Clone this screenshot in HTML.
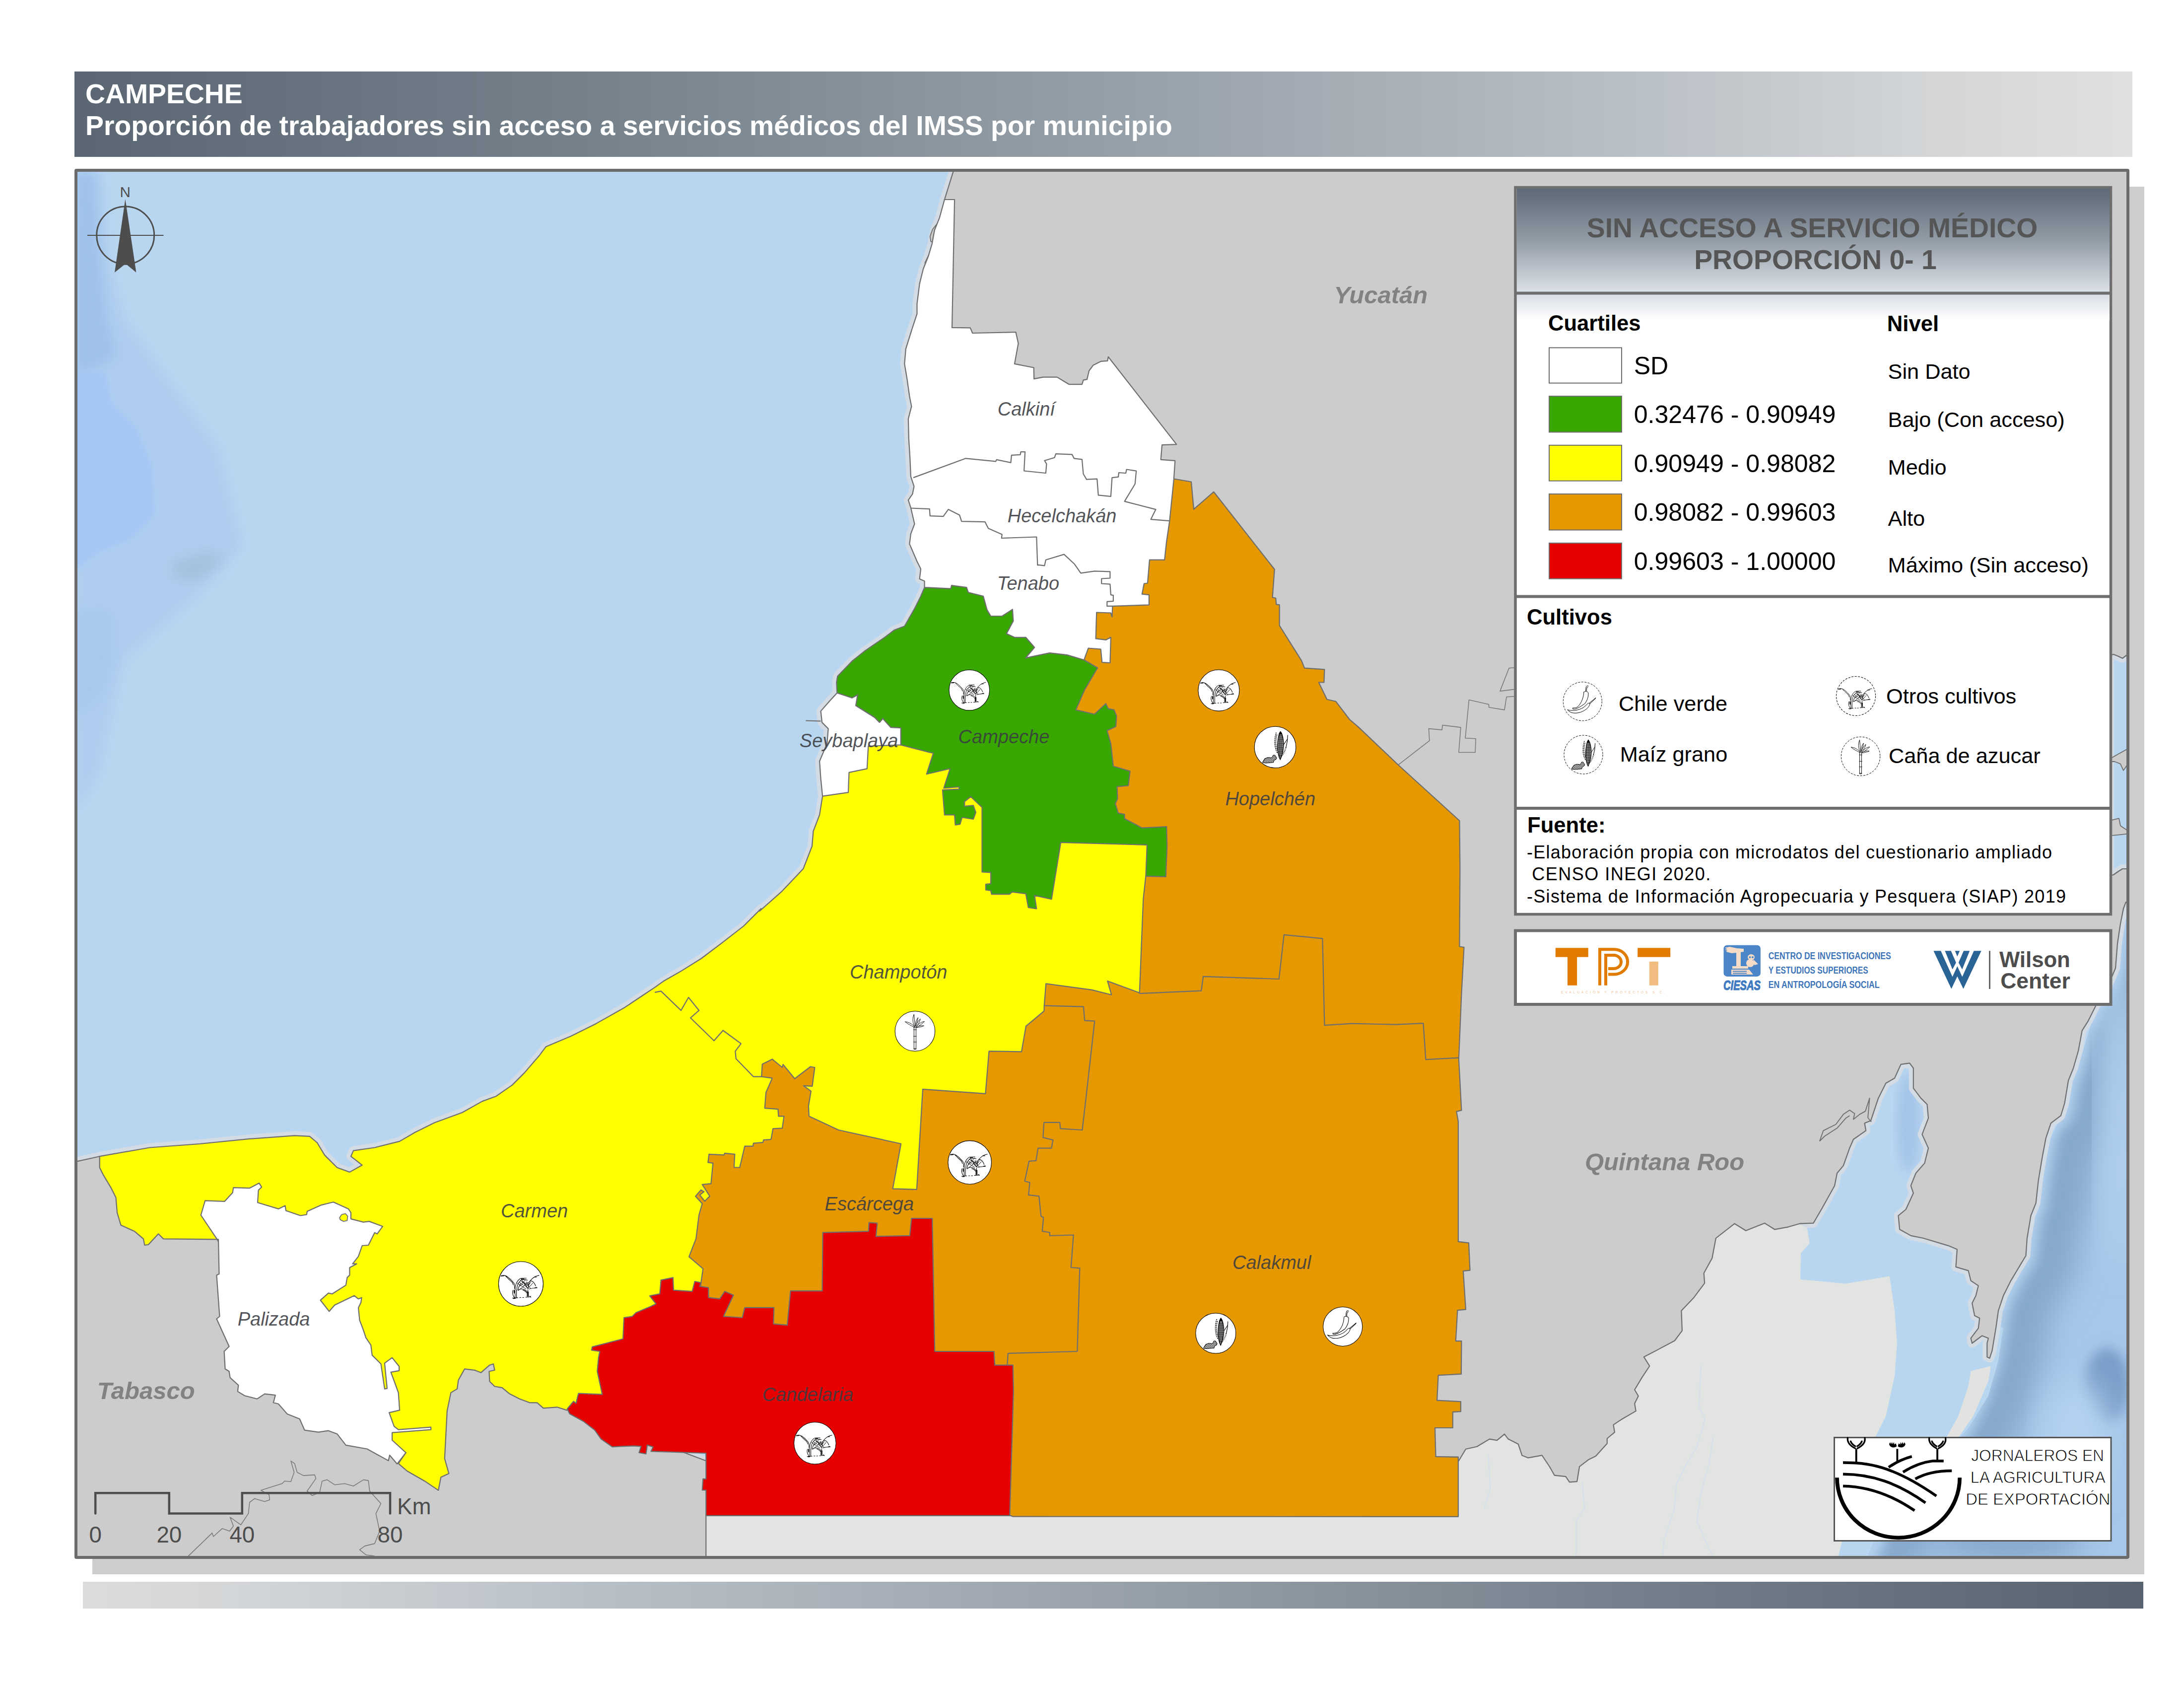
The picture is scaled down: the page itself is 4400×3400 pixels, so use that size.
<!DOCTYPE html>
<html><head><meta charset="utf-8"><title>Campeche</title><style>
html,body{margin:0;padding:0;background:#fff;}
body{width:4400px;height:3400px;position:relative;overflow:hidden;font-family:"Liberation Sans",sans-serif;}
.abs{position:absolute;}
#hdr{left:150px;top:144px;width:4146px;height:172px;background:linear-gradient(90deg,#5a6672 0%,#75828c 25%,#959fa8 50%,#b8bfc5 75%,#d3d5d7 90%,#e0e0e0 100%);}
#hdr div{position:absolute;left:22px;color:#fff;font-weight:bold;font-size:55.35px;white-space:nowrap;line-height:64px;}
#ftr{left:167px;top:3186px;width:4151px;height:54px;background:linear-gradient(90deg,#dcdcdc 0%,#d0d3d6 10%,#b8c0c7 25%,#9aa3ac 49%,#74818c 75%,#57636e 100%);}
#shadow1{left:4290px;top:376px;width:30px;height:2795px;background:#cdcdcd;}
#shadow2{left:186px;top:3140px;width:4134px;height:31px;background:#cdcdcd;}
#frame{left:150px;top:340px;width:4128px;height:2788px;border:6px solid #6b6b6b;border-radius:4px;overflow:hidden;background:#b9d6f0;}
svg text{font-family:"Liberation Sans",sans-serif;}
.lbl{font-style:italic;font-size:38px;fill:#3a3c42;fill-opacity:.88;}
.st{font-style:italic;font-weight:bold;font-size:49px;fill:#828282;}
.lg{font-size:43.3px;fill:#000;}
.lgb{font-size:43.6px;font-weight:bold;fill:#000;}
.rng{font-size:50.1px;fill:#000;}
.src{font-size:36px;fill:#000;}
</style></head><body>
<div id="hdr" class="abs"><div style="top:13px">CAMPECHE</div><div style="top:77px">Proporción de trabajadores sin acceso a servicios médicos del IMSS por municipio</div></div>
<div id="shadow1" class="abs"></div><div id="shadow2" class="abs"></div>
<div id="frame" class="abs">
<svg width="4128" height="2788" viewBox="156 346 4128 2788" style="position:absolute;left:0;top:0">
<defs>
<linearGradient id="gcar" x1="0" x2="1" y1="0" y2="0"><stop offset="0" stop-color="#b4d2ee"/><stop offset="0.12" stop-color="#9bbbdc"/><stop offset="0.3" stop-color="#88aacf"/><stop offset="0.6" stop-color="#93b5da"/><stop offset="1" stop-color="#a4c4e8"/></linearGradient>
<linearGradient id="glh" x1="0" x2="0" y1="0" y2="1"><stop offset="0" stop-color="#5d6976"/><stop offset="0.5" stop-color="#929ca7"/><stop offset="1" stop-color="#dde2e8"/></linearGradient>
<linearGradient id="glh2" x1="0" x2="0" y1="0" y2="1"><stop offset="0" stop-color="#d9dee5"/><stop offset="1" stop-color="#ffffff"/></linearGradient>
<filter id="b30" x="-20%" y="-20%" width="140%" height="140%"><feGaussianBlur stdDeviation="30"/></filter>
<filter id="b5" x="-20%" y="-20%" width="140%" height="140%"><feGaussianBlur stdDeviation="5"/></filter>
<filter id="b12" x="-20%" y="-20%" width="140%" height="140%"><feGaussianBlur stdDeviation="12"/></filter>
<pattern id="grid" width="2.5" height="2.5" patternUnits="userSpaceOnUse"><rect width="2.5" height="2.5" fill="#fff"/><path d="M0,0.5H2.5M0.5,0V2.5" stroke="#000" stroke-width="0.9" fill="none"/></pattern>
<pattern id="hatch" width="2.4" height="2.4" patternUnits="userSpaceOnUse" patternTransform="rotate(40)"><rect width="2.4" height="2.4" fill="#fff"/><path d="M0,0.5H2.4M0.5,0V2.4" stroke="#000" stroke-width="0.6" fill="none"/></pattern>

<g id="ic-chile" fill="none" stroke="#000" stroke-width="1" stroke-linecap="round" stroke-linejoin="round">
<path d="M2.6,-18.8 C2.1,-8.8 -1.4,2.6 -10,11.1 C-13,13 -17,13.5 -19.9,13.2 L-19.6,15.4 C-15,16.5 -8.5,13.9 4.3,4.7 C10,-2 12,-10 11.7,-17.3 C10,-21 4,-21.5 2.6,-18.8 Z" fill="#fff"/>
<path d="M6.4,-21 C6.2,-27 7,-33 11.4,-31.6 M8,-21 C8,-26 9,-30 11.4,-29.5"/>
<path d="M14.9,4.7 C14,11 8,16 1.4,19.6 C-5,23 -15,25 -22.7,22.5 C-26,21 -29,19 -30.6,16.8 C-27,18 -24,18.5 -22.7,18.2 C-18,19 -8,18 1.4,12.5 C5,10 8,7 10,4.7 C11,3 14,3 14.9,4.7 Z" fill="#fff"/>
<path d="M13.5,3.5 L26.7,-7.4 M15,4.5 L26.7,-6.2"/>
</g>

<g id="ic-maiz" fill="none" stroke="#000" stroke-width="0.9" stroke-linecap="round">
<path d="M10,-29.4 C6.5,-25 4.3,-12 4.6,0 C5,10 7,19 9.6,23.3 C12.5,17 15,8 15.8,-2 C16.3,-14 13.5,-26 10,-29.4Z" fill="url(#grid)" stroke-width="1.3"/>
<path d="M10,-29.4 C8.6,-27.8 7.8,-26.2 7.3,-24.5 L12.8,-24.5 C12.3,-26.2 11.5,-27.8 10,-29.4Z" fill="#000"/>
<path d="M2.1,-27.7 C-1.2,-19 -1.6,-6 0.4,1 C1.5,6 3,9 4.9,11.6 M3.4,-24 C1,-16 0.8,-6 2.4,0 C3,3 3.8,5 4.6,6.5" stroke-dasharray="2.4 1.3" stroke-width="1.3" stroke-linecap="butt"/>
<path d="M23.7,-22.7 C23.7,-15 22,-5 20.4,0.6" stroke-width="1.1"/>
<path d="M20.4,0.6 C19,5 17,10 14.5,13.5 C13.5,15.2 12.5,16.5 11.5,17.2" stroke-dasharray="0.9 1.7" stroke-width="2.6" stroke-linecap="butt"/>
<path d="M23.2,-15.5 L16.5,-5.5" stroke-width="1"/>
<path d="M-23.4,27.7 L-19.5,21.6 L-14,19.4 L-6.2,20 L-3.4,15 L-0.7,15 L2.7,20 L1.6,22.7 L-2.3,25 L-3.4,28.8 L-17.3,30 L-23.4,29.4Z" fill="url(#hatch)" stroke-width="1" stroke-linejoin="round"/>
</g>

<g id="ic-otros" fill="none" stroke="#000" stroke-width="0.95" stroke-linecap="round" stroke-linejoin="round">
<path d="M-34.6,-14 C-32,-15 -30,-15 -28.3,-14.7 C-26,-14 -24,-13 -22.6,-11.7 C-20,-9.5 -18,-8 -16.9,-6.6 C-15,-4.5 -13.5,-3 -12.3,-1.4 C-11.5,0 -11.2,1.5 -11.2,2.6 L-11.2,8.3 M-26.6,-13.4 C-24.5,-11.5 -23,-10 -21.5,-8.3 C-19.5,-6.5 -17.5,-4.8 -15.7,-3.1 C-14.5,-1.5 -13.6,0.5 -13.2,2"/>
<path d="M-34.6,-14 L-30,-14.2" stroke-width="1.6"/>
<path d="M-14,11.2 C-14.6,13 -14.8,15 -14.6,16.9 C-14,20 -12.5,22.5 -11.2,24.3 M-7.7,11.2 L-7.7,24.3 M-10.2,12 L-10,24"/>
<ellipse cx="-11.8" cy="13.8" rx="0.9" ry="3.6" fill="#000" stroke="none"/>
<path d="M-10,11.2 C-10,7 -9.8,4 -8.9,1.4 C-8,-1.5 -7,-3.5 -5.4,-5.4 C-4,-7 -2.5,-8.5 -0.9,-9.4 M-7.2,11.2 C-7.2,8 -6.8,5 -6,2.6 C-5,-0.5 -3.6,-2.6 -2,-4.3 C-0.3,-6.2 1.6,-7.8 3.7,-8.9 M-5,11 C-4.6,7 -3,3 0,-0.5"/>
<path d="M0.3,-9.7 L9.4,-10 M0.3,-9.7 L2.6,-7.7 L11.7,-6.6 M3.5,-9.7 L6.5,-7.2"/>
<path d="M11.2,14 L10.9,22 M13.4,14 L13.2,22 M12.3,10 L12.2,22"/>
<path d="M11.2,14 C9.5,12 8,10.8 6,10 C4,9.2 2,8.8 0.3,8.9 C-1.5,9.2 -3,10 -4.3,11.2 M10.5,16 C8.5,13 6,11.6 3.5,11"/>
<path d="M12.9,8.3 C10.5,5 8.5,2.5 6,-0.3 C4.8,-1.6 3.4,-2.8 2,-3.7 M13.2,7.5 C13.3,3 13.8,-0.5 14.6,-3.1 C15.2,-4.2 16.2,-5 17.4,-5.4 M16.3,-5.4 C18.5,-8 20.8,-10 23.2,-11.7 C26,-13.3 29,-14.4 31.8,-14.9 M23.2,-11.7 L27.5,-12 M17.4,-5.4 C19,-5 20.6,-4.2 22,-3.1 C23.6,-1.2 25,1.2 26,3.7 M14.6,8.9 C17.5,8 20.4,7.6 23.2,7.4 C25,7.2 27,7 28.6,6.9 M23.2,7.4 L27.8,5.9"/>
<path d="M-6.6,-1.4 L8.9,8.9 M-4.3,11.2 L16.3,-4.3 M0.3,-9.4 L11.7,8.3 M6,-3.1 L17.4,8.3 M9.4,-3.7 L14.6,5.4 M17.4,-3.1 L13.4,2.6 M20.9,-1.4 L15.2,4.9 M-3,-3 L4,2 M-1,-6 L8,0 M2,-1 L9,-8 M5,3 L12,-3 M8,5 L15,-1 M-2,4 L3,0" stroke-width="0.85"/>
<path d="M-14.6,24.9 L-5.4,24.3 M-2,24.1 L0,24 M3,24 L5,23.9 M8.3,23.5 L17.4,22.6 M15.5,21.5 L17.5,23.5 M-13,25.8 L-9.5,25.5"/>
</g>

<g id="ic-cana" fill="#fff" stroke="#000" stroke-width="0.9" stroke-linecap="round" stroke-linejoin="round">
<path d="M-2,-7 L-2,35.5 L2,35.5 L2,-7 Z M-2.8,-2.8 H2.8 M-2.8,10 H2.8 M-2.8,21.3 H2.8 M-2.5,34 H2.5"/>
<path d="M-1,-9 C-6,-14 -12,-18 -19.5,-18.5 C-14,-14 -8,-11 -2,-8Z"/>
<path d="M-1.5,-10 C-5,-18 -5,-26 -2,-33 C-1,-26 -1,-18 0,-11Z"/>
<path d="M0.5,-11 C1,-18 3,-23 6,-26.5 C5,-21 3.5,-16 2,-11Z"/>
<path d="M2,-11 C4,-17 7,-21 10.5,-24 C9.5,-19 6.5,-14 3.5,-10Z"/>
<path d="M3,-9.5 C8,-15 13,-18.5 18.5,-19 C14.5,-15 9,-11 4,-8Z"/>
<path d="M3,-8 C8,-10.5 13,-11.5 17.5,-10.5 C13,-8.5 8,-7.5 3.5,-7Z"/>
<path d="M-2.5,-7 C-3,-10 3,-11 3,-7" fill="none"/>
</g>
</defs>
<rect x="150" y="340" width="4140" height="2800" fill="#b9d6f0"/>
<path d="M150,346 L205,346 L218,520 L252,640 L330,750 L440,900 L490,1100 L400,1200 L250,1330 L200,1560 L150,1640Z" fill="#afcdf0" filter="url(#b12)"/>
<path d="M150,346 L190,346 L200,500 L215,640 L235,720 L150,760Z" fill="#9fc1ea" filter="url(#b12)"/>
<path d="M150,750.6 L212,750.6 L224.6,812.8 L274.4,862.5 L305.5,937.2 L311.7,1036.7 L262,1086.5 L199.8,1111.4 L150,1148.7Z" fill="#a5c7f4" filter="url(#b5)"/>
<path d="M150,1230 L225,1230 L230,1330 L205,1400 L160,1440 L150,1440Z" fill="#a8c8ee" filter="url(#b12)"/>
<path d="M345,1135 L415,1110 L455,1125 L400,1170 L350,1165Z" fill="#a6c1de" filter="url(#b12)"/>
<ellipse cx="3845" cy="2262" rx="22" ry="100" fill="#a3c3e8" filter="url(#b12)"/>
<clipPath id="carclip"><path d="M4300.0,1320.0 L4300.0,3145.0 L3760.0,3145.0 L3764.1,3134.2 L3794.3,3053.7 L3854.8,3003.3 L3915.2,2932.8 L3965.6,2877.4 L4005.9,2811.9 L4026.0,2741.4 L4036.1,2675.9 L4026.0,2665.2 L4041.1,2619.9 L4056.2,2589.7 L4086.4,2539.3 L4094.0,2478.8 L4106.6,2423.4 L4119.2,2352.9 L4131.8,2292.5 L4146.9,2262.3 L4162.0,2247.2 L4172.1,2191.8 L4197.3,2116.2 L4212.4,2065.8 L4232.5,2025.5 L4262.0,1950.0 L4283.0,1817.0 L4300.0,1750.0Z"/></clipPath>
<g clip-path="url(#carclip)">
<rect x="3700" y="1300" width="600" height="1900" fill="#a7c7ea"/>
<path d="M4290.0,1750.0 L4283.0,1817.0 L4272.0,1860.0 L4262.0,1950.0 L4245.0,1990.0 L4222.4,2025.5 L4207.3,2055.8 L4194.7,2075.9 L4187.2,2116.2 L4177.1,2151.5 L4167.0,2176.6 L4159.5,2222.0 L4151.9,2247.2 L4131.8,2262.3 L4121.7,2292.5 L4114.1,2332.8 L4106.6,2378.1 L4101.6,2423.4 L4091.5,2448.6 L4083.9,2494.0 L4081.4,2529.2 L4066.3,2554.4 L4051.2,2579.6 L4036.1,2609.8 L4026.0,2640.0 L4021.0,2675.3 L4013.4,2720.6 L4008.4,2735.7 L4005.9,2751.5 L3985.7,2811.9 L3955.5,2872.3 L3915.2,2932.8 L3854.8,3003.3 L3794.3,3053.7 L3754.0,3154.4" fill="none" stroke="#86a8cd" stroke-width="210" stroke-linejoin="round" filter="url(#b30)"/>
<path d="M4290.0,1750.0 L4283.0,1817.0 L4272.0,1860.0 L4262.0,1950.0 L4245.0,1990.0 L4222.4,2025.5 L4207.3,2055.8 L4194.7,2075.9 L4187.2,2116.2 L4177.1,2151.5 L4167.0,2176.6 L4159.5,2222.0 L4151.9,2247.2 L4131.8,2262.3 L4121.7,2292.5 L4114.1,2332.8 L4106.6,2378.1 L4101.6,2423.4 L4091.5,2448.6 L4083.9,2494.0 L4081.4,2529.2 L4066.3,2554.4 L4051.2,2579.6 L4036.1,2609.8 L4026.0,2640.0 L4021.0,2675.3 L4013.4,2720.6 L4008.4,2735.7 L4005.9,2751.5 L3985.7,2811.9 L3955.5,2872.3 L3915.2,2932.8 L3854.8,3003.3 L3794.3,3053.7 L3754.0,3154.4" fill="none" stroke="#b3d1ee" stroke-width="44" stroke-linejoin="round" filter="url(#b12)"/>
<ellipse cx="4245" cy="2790" rx="45" ry="75" fill="#7a9ec8" filter="url(#b12)"/>
<ellipse cx="4180" cy="2900" rx="70" ry="120" fill="#b3d2f0" filter="url(#b30)"/>
<ellipse cx="4050" cy="3100" rx="150" ry="50" fill="#86a8cd" filter="url(#b30)"/>
<ellipse cx="4270" cy="2250" rx="40" ry="300" fill="#b0cfee" filter="url(#b30)"/>
</g>
<path d="M1657.1,1603.7 L1651.1,1641.4 L1638.5,1674.2 L1636.0,1704.4 L1618.4,1749.7 L1575.5,1795.1 L1530.2,1835.3 L1533.2,1830.2 L1497.9,1865.5 L1452.6,1900.7 L1412.3,1931.0 L1372.0,1956.1 L1336.7,1976.3 L1319.1,1988.9 L1296.4,2004.0 L1258.7,2029.2 L1200.7,2061.9 L1150.4,2087.1 L1100.0,2108.2 L1087.2,2125.2 L1057.0,2160.4 L1031.8,2185.6 L999.0,2208.3 L971.3,2218.4 L931.0,2241.0 L875.6,2261.2 L835.3,2281.3 L805.1,2298.9 L754.8,2311.5 L712.0,2317.6 L706.9,2329.2 L729.6,2346.8 L704.4,2360.9 L679.2,2351.8 L654.0,2326.6 L638.9,2301.5 L623.8,2288.9 L593.6,2287.4 L502.9,2293.9 L402.2,2304.0 L301.5,2311.5 L200.7,2329.2 L200.7,2351.8 L208.3,2366.9 L223.4,2392.1 L233.5,2412.3 L236.0,2442.5 L243.5,2467.7 L271.2,2480.3 L288.9,2495.4 L291.4,2508.0 L298.9,2507.0 L319.1,2485.3 L329.2,2495.4 L437.5,2496.4 L553.3,2704.4 L754.8,2905.9 L817.7,2926.0 L802.6,2947.9 L820.2,2963.0 L855.5,2983.2 L883.2,3001.8 L888.2,2975.6 L904.3,2968.0 L895.8,2937.8 L900.8,2842.1 L908.4,2805.1 L921.0,2797.6 L923.5,2779.9 L936.1,2757.3 L956.2,2759.8 L968.8,2764.8 L986.4,2749.7 L994.0,2747.2 L996.5,2759.8 L985.4,2762.3 L986.4,2782.5 L996.5,2792.5 L1011.6,2795.1 L1026.7,2807.6 L1046.9,2817.7 L1067.0,2825.3 L1082.1,2825.3 L1094.7,2836.4 L1122.4,2834.3 L1141.6,2840.4 L1301.5,2802.6 L1402.2,2651.5 L1412.3,2583.5 L1416.3,2555.5 L1388.1,2531.3 L1402.2,2495.1 L1408.2,2447.2 L1414.8,2424.5 L1401.2,2409.4 L1412.3,2396.8 L1418.3,2400.4 L1409.8,2406.9 L1419.8,2419.5 L1429.9,2409.4 L1414.8,2385.8 L1432.4,2384.2 L1436.4,2342.9 L1426.4,2341.4 L1428.4,2324.8 L1458.6,2326.3 L1460.1,2322.8 L1480.3,2324.8 L1478.8,2351.5 L1490.3,2351.5 L1500.4,2308.7 L1517.0,2308.7 L1518.0,2302.7 L1537.2,2301.1 L1538.2,2296.1 L1553.3,2295.1 L1557.3,2273.4 L1576.0,2272.4 L1579.5,2248.3 L1568.4,2248.3 L1567.4,2234.2 L1540.7,2232.1 L1543.2,2200.4 L1555.8,2171.7 L1534.2,2168.7 L1535.7,2143.5 L1555.8,2133.4 L1576.0,2150.0 L1577.5,2144.0 L1601.1,2172.7 L1632.9,2148.5 L1641.4,2150.0 L1636.4,2187.8 L1618.8,2186.8 L1633.9,2197.9 L1628.8,2228.1 L1629.9,2248.3 L1689.3,2276.0 L1815.2,2303.7 L1798.6,2394.3 L1846.9,2395.8 L1859.0,2193.9 L1985.4,2202.9 L1992.5,2117.3 L2058.0,2118.3 L2067.0,2066.9 L2103.3,2036.7 L2103.8,2024.1 L2107.3,1981.3 L2200.0,1993.9 L2239.3,2003.7 L2231.2,1976.0 L2295.7,1999.7 L2303.3,1810.8 L2308.3,1765.5 L2331.0,1754.8 L2331.0,1684.2 L2205.1,1654.0 L2003.7,1502.9 L1852.6,1492.9 L1741.8,1462.6 L1676.3,1528.1Z" fill="none" stroke="#d3dbe4" stroke-width="18" stroke-linejoin="round"/>
<path d="M1862.6,1183.1 L1915.5,1185.6 L1917.0,1179.1 L1947.3,1183.1 L1950.8,1193.2 L1981.0,1200.7 L1988.6,1228.4 L1996.1,1241.0 L2018.8,1241.0 L2039.9,1227.4 L2041.4,1251.1 L2027.8,1276.3 L2044.0,1283.8 L2066.6,1283.8 L2084.2,1304.0 L2066.6,1325.1 L2114.5,1315.1 L2149.7,1319.1 L2184.0,1329.2 L2211.2,1345.3 L2185.0,1389.6 L2167.4,1429.9 L2205.1,1438.5 L2227.8,1417.3 L2232.8,1427.4 L2244.4,1429.9 L2249.5,1442.5 L2247.9,1463.6 L2230.3,1471.7 L2237.9,1497.9 L2242.9,1543.2 L2276.6,1553.3 L2273.1,1582.5 L2250.5,1584.5 L2251.5,1608.7 L2246.9,1618.8 L2253.0,1637.9 L2265.6,1640.4 L2265.6,1649.0 L2300.8,1667.6 L2350.2,1665.1 L2351.2,1704.4 L2348.7,1765.8 L2308.4,1764.8 L2310.9,1701.9 L2137.1,1696.8 L2118.5,1811.2 L2084.2,1803.6 L2088.3,1830.3 L2071.7,1827.8 L2066.6,1800.1 L2038.9,1796.6 L2033.9,1801.1 L1997.6,1801.1 L1996.1,1794.0 L1986.0,1792.5 L1986.0,1781.0 L1996.1,1779.9 L1996.1,1757.3 L1978.5,1756.3 L1978.5,1626.3 L1955.8,1604.7 L1943.2,1614.7 L1943.2,1623.8 L1960.9,1622.3 L1965.9,1636.4 L1960.9,1650.0 L1938.2,1646.5 L1934.2,1660.1 L1924.6,1661.6 L1923.1,1641.4 L1902.9,1641.4 L1898.9,1591.1 L1932.1,1589.6 L1932.1,1585.0 L1901.4,1587.5 L1914.0,1548.3 L1866.7,1559.3 L1880.3,1517.0 L1872.7,1515.5 L1814.8,1500.4 L1814.8,1466.2 L1794.6,1465.2 L1778.5,1447.5 L1772.0,1455.1 L1761.9,1445.0 L1724.1,1421.3 L1727.7,1399.7 L1716.6,1405.7 L1686.4,1395.7 L1685.3,1374.5 L1687.4,1361.9 L1716.6,1331.7 L1741.8,1311.5 L1782.1,1283.8 L1802.2,1268.7 L1822.3,1261.2 L1842.5,1225.9 L1855.1,1200.7Z" fill="none" stroke="#d3dbe4" stroke-width="18" stroke-linejoin="round"/>
<path d="M1902.9,402.0 L1892.9,438.3 L1882.8,463.5 L1877.7,491.2 L1870.2,516.4 L1860.1,541.5 L1852.6,571.8 L1847.5,612.1 L1847.5,632.2 L1837.5,662.4 L1824.9,702.7 L1822.3,732.9 L1827.4,763.2 L1832.4,798.4 L1836.4,818.6 L1829.9,843.7 L1830.9,884.0 L1833.4,924.3 L1834.9,959.6 L1841.5,979.7 L1838.5,994.8 L1829.9,1007.4 L1834.9,1022.5 L1842.5,1055.3 L1834.9,1075.4 L1832.4,1095.6 L1847.5,1130.8 L1855.1,1145.9 L1852.6,1166.1 L1862.6,1170.5 L1862.6,1183.1 L1915.5,1185.6 L1917.0,1179.1 L1947.3,1183.1 L1950.8,1193.2 L1981.0,1200.7 L1988.6,1228.4 L1996.1,1241.0 L2018.8,1241.0 L2039.9,1227.4 L2041.4,1251.1 L2027.8,1276.3 L2044.0,1283.8 L2066.6,1283.8 L2084.2,1304.0 L2066.6,1325.1 L2114.5,1315.1 L2149.7,1319.1 L2184.0,1329.2 L2192.5,1305.5 L2217.7,1307.5 L2220.2,1334.2 L2236.4,1335.2 L2237.9,1283.8 L2227.8,1288.9 L2207.6,1286.4 L2209.2,1233.5 L2237.9,1234.5 L2240.4,1242.5 L2241.4,1220.9 L2314.9,1218.4 L2314.9,1198.2 L2300.8,1196.7 L2304.9,1175.5 L2311.9,1174.5 L2315.9,1127.7 L2346.2,1127.7 L2350.2,1090.5 L2356.2,1050.2 L2364.8,965.6 L2367.3,927.8 L2338.6,925.8 L2341.1,896.1 L2370.3,895.1 L2232.8,718.8 L2231.3,726.9 L2217.7,727.9 L2202.6,735.4 L2194.0,747.0 L2190.0,764.2 L2182.5,765.7 L2179.9,774.2 L2153.8,774.2 L2129.6,759.6 L2101.9,759.6 L2083.2,763.2 L2082.7,740.5 L2044.0,732.9 L2051.5,691.6 L2046.5,669.0 L1959.3,671.0 L1954.8,660.4 L1918.0,659.9 L1923.1,402.0Z" fill="none" stroke="#d3dbe4" stroke-width="18" stroke-linejoin="round"/>
<path d="M1686.4,1395.7 L1671.2,1412.3 L1653.6,1432.4 L1656.1,1455.1 L1668.7,1467.7 L1666.2,1497.9 L1651.1,1533.2 L1653.6,1568.4 L1657.1,1603.7 L1709.0,1596.1 L1710.5,1555.8 L1746.8,1548.3 L1749.3,1502.9 L1814.8,1500.4 L1814.8,1466.2 L1794.6,1465.2 L1778.5,1447.5 L1772.0,1455.1 L1761.9,1445.0 L1724.1,1421.3 L1727.7,1399.7 L1716.6,1405.7Z" fill="none" stroke="#d3dbe4" stroke-width="18" stroke-linejoin="round"/>
<path d="M1920.5,345.0 L4290.0,345.0 L4290.0,1322.0 L4284.0,1320.0 L4276.0,1326.0 L4268.0,1322.0 L4258.0,1318.0 L4250.0,1320.0 L4250.0,1764.0 L4258.0,1762.0 L4268.0,1755.0 L4276.0,1750.0 L4284.0,1750.0 L4290.0,1750.0 L4290.0,1817.0 L4283.0,1817.0 L4278.0,1830.0 L4272.0,1860.0 L4266.0,1900.0 L4262.0,1950.0 L4245.0,1990.0 L4222.4,2025.5 L4207.3,2055.8 L4194.7,2075.9 L4187.2,2116.2 L4177.1,2151.5 L4167.0,2176.6 L4159.5,2222.0 L4151.9,2247.2 L4131.8,2262.3 L4121.7,2292.5 L4114.1,2332.8 L4106.6,2378.1 L4101.6,2423.4 L4091.5,2448.6 L4083.9,2494.0 L4081.4,2529.2 L4066.3,2554.4 L4051.2,2579.6 L4036.1,2609.8 L4026.0,2640.0 L4021.0,2675.3 L4013.4,2720.6 L4008.4,2735.7 L4003.3,2733.2 L4003.3,2705.5 L4005.9,2695.4 L3993.3,2690.4 L3973.1,2705.5 L3970.6,2695.4 L3985.7,2675.3 L3988.2,2655.1 L3978.2,2650.1 L3973.1,2624.9 L3980.7,2609.8 L3985.7,2589.7 L3970.6,2579.6 L3965.6,2559.4 L3940.4,2551.9 L3942.9,2516.6 L3925.3,2509.1 L3874.9,2494.0 L3849.7,2488.9 L3827.1,2476.3 L3824.5,2448.6 L3839.7,2436.0 L3854.8,2403.3 L3849.7,2388.2 L3859.8,2363.0 L3877.4,2342.9 L3885.0,2312.6 L3872.4,2284.9 L3885.0,2252.2 L3882.5,2224.5 L3869.9,2211.9 L3854.8,2191.8 L3854.8,2151.5 L3847.2,2141.4 L3829.6,2143.9 L3817.0,2171.6 L3799.4,2181.7 L3784.2,2211.9 L3769.1,2257.2 L3756.5,2262.3 L3759.1,2277.4 L3733.9,2295.0 L3726.3,2312.6 L3713.7,2347.9 L3701.1,2363.0 L3696.1,2388.2 L3670.9,2433.5 L3653.3,2463.7 L3625.6,2464.7 L3602.9,2471.3 L3575.2,2476.3 L3555.1,2463.7 L3517.3,2478.8 L3494.6,2464.7 L3456.9,2494.0 L3449.3,2534.2 L3432.7,2564.5 L3434.2,2584.6 L3411.5,2614.8 L3387.4,2640.0 L3388.9,2680.3 L3373.8,2700.5 L3336.0,2720.6 L3311.8,2733.2 L3323.4,2751.5 L3308.3,2774.1 L3293.2,2799.3 L3300.7,2811.9 L3293.2,2827.0 L3295.7,2842.1 L3265.5,2859.8 L3250.4,2869.8 L3252.9,2884.9 L3237.8,2897.5 L3237.8,2907.6 L3215.1,2932.8 L3200.0,2940.3 L3182.1,2954.0 L3177.1,2984.2 L3162.0,2985.3 L3154.4,2974.2 L3131.8,2971.7 L3121.7,2954.0 L3106.6,2931.4 L3078.9,2936.4 L3066.3,2931.4 L3058.7,2908.7 L3038.6,2898.6 L3031.0,2888.6 L3015.9,2901.1 L3000.8,2898.6 L2975.6,2913.7 L2953.0,2918.8 L2937.9,2944.0 L2937.9,2934.9 L2854.8,2934.9 L2800.0,2800.0 L2800.0,1800.0 L2400.0,1200.0 L2250.0,900.0 L2000.0,700.0 L1902.9,700.2 L1902.9,531.5 L1913.0,410.6 L1902.9,402.0 L1920.6,345.1Z" fill="none" stroke="#d3dbe4" stroke-width="18" stroke-linejoin="round"/>
<path d="M150.0,2339.2 L155.4,2339.2 L200.7,2329.2 L251.1,2351.8 L603.7,2402.2 L855.5,2603.7 L1057.0,2754.8 L1251.1,2878.1 L1452.6,2953.7 L1422.3,3052.9 L1422.3,3140.0 L150.0,3140.0Z" fill="none" stroke="#d3dbe4" stroke-width="18" stroke-linejoin="round"/>
<path d="M1422.0,3040.0 L1422.0,3145.0 L3698.6,3154.4 L3703.7,3134.2 L3723.8,3053.7 L3749.0,2978.1 L3774.2,2902.6 L3799.4,2852.2 L3817.0,2771.6 L3822.0,2705.5 L3817.0,2640.0 L3806.9,2570.5 L3718.8,2585.6 L3627.1,2577.1 L3628.1,2524.2 L3645.7,2504.0 L3640.7,2473.8 L3300.0,2300.0 L2800.0,2300.0 L2000.0,2900.0Z" fill="#e2e4e2"/>
<path d="M3970.6,2761.5 L4010.9,2751.5 L4005.9,2781.7 L3975.6,2852.2 L3940.4,2902.6 L3920.2,2897.5 L3945.4,2852.2 L3965.6,2791.8Z" fill="#e2e3e1"/>
<path d="M3426.9,2750.0 L3422.8,2832.4 L3435.2,2857.1 L3418.7,2914.8 L3398.1,2947.8 L3377.5,2989.0 L3373.3,3038.5 L3352.7,3100.3 L3348.6,3141.5" fill="none" stroke="#d6e0ea" stroke-width="2.2" stroke-linejoin="round"/>
<path d="M3451.6,2894.2 L3443.4,2947.8 L3426.9,3005.5 L3418.7,3063.2 L3443.4,3120.9 L3455.8,3141.5" fill="none" stroke="#d6e0ea" stroke-width="2.2" stroke-linejoin="round"/>
<path d="M3187.9,2984.9 L3192.0,3038.5 L3175.5,3063.2 L3175.5,3141.5" fill="none" stroke="#d6e0ea" stroke-width="2.2" stroke-linejoin="round"/>
<path d="M2998.3,2931.3 L3002.5,2997.2 L2990.1,3038.5" fill="none" stroke="#d6e0ea" stroke-width="2.2" stroke-linejoin="round"/>
<path d="M1920.5,345.0 L4290.0,345.0 L4290.0,1322.0 L4284.0,1320.0 L4276.0,1326.0 L4268.0,1322.0 L4258.0,1318.0 L4250.0,1320.0 L4250.0,1764.0 L4258.0,1762.0 L4268.0,1755.0 L4276.0,1750.0 L4284.0,1750.0 L4290.0,1750.0 L4290.0,1817.0 L4283.0,1817.0 L4278.0,1830.0 L4272.0,1860.0 L4266.0,1900.0 L4262.0,1950.0 L4245.0,1990.0 L4222.4,2025.5 L4207.3,2055.8 L4194.7,2075.9 L4187.2,2116.2 L4177.1,2151.5 L4167.0,2176.6 L4159.5,2222.0 L4151.9,2247.2 L4131.8,2262.3 L4121.7,2292.5 L4114.1,2332.8 L4106.6,2378.1 L4101.6,2423.4 L4091.5,2448.6 L4083.9,2494.0 L4081.4,2529.2 L4066.3,2554.4 L4051.2,2579.6 L4036.1,2609.8 L4026.0,2640.0 L4021.0,2675.3 L4013.4,2720.6 L4008.4,2735.7 L4003.3,2733.2 L4003.3,2705.5 L4005.9,2695.4 L3993.3,2690.4 L3973.1,2705.5 L3970.6,2695.4 L3985.7,2675.3 L3988.2,2655.1 L3978.2,2650.1 L3973.1,2624.9 L3980.7,2609.8 L3985.7,2589.7 L3970.6,2579.6 L3965.6,2559.4 L3940.4,2551.9 L3942.9,2516.6 L3925.3,2509.1 L3874.9,2494.0 L3849.7,2488.9 L3827.1,2476.3 L3824.5,2448.6 L3839.7,2436.0 L3854.8,2403.3 L3849.7,2388.2 L3859.8,2363.0 L3877.4,2342.9 L3885.0,2312.6 L3872.4,2284.9 L3885.0,2252.2 L3882.5,2224.5 L3869.9,2211.9 L3854.8,2191.8 L3854.8,2151.5 L3847.2,2141.4 L3829.6,2143.9 L3817.0,2171.6 L3799.4,2181.7 L3784.2,2211.9 L3769.1,2257.2 L3756.5,2262.3 L3759.1,2277.4 L3733.9,2295.0 L3726.3,2312.6 L3713.7,2347.9 L3701.1,2363.0 L3696.1,2388.2 L3670.9,2433.5 L3653.3,2463.7 L3625.6,2464.7 L3602.9,2471.3 L3575.2,2476.3 L3555.1,2463.7 L3517.3,2478.8 L3494.6,2464.7 L3456.9,2494.0 L3449.3,2534.2 L3432.7,2564.5 L3434.2,2584.6 L3411.5,2614.8 L3387.4,2640.0 L3388.9,2680.3 L3373.8,2700.5 L3336.0,2720.6 L3311.8,2733.2 L3323.4,2751.5 L3308.3,2774.1 L3293.2,2799.3 L3300.7,2811.9 L3293.2,2827.0 L3295.7,2842.1 L3265.5,2859.8 L3250.4,2869.8 L3252.9,2884.9 L3237.8,2897.5 L3237.8,2907.6 L3215.1,2932.8 L3200.0,2940.3 L3182.1,2954.0 L3177.1,2984.2 L3162.0,2985.3 L3154.4,2974.2 L3131.8,2971.7 L3121.7,2954.0 L3106.6,2931.4 L3078.9,2936.4 L3066.3,2931.4 L3058.7,2908.7 L3038.6,2898.6 L3031.0,2888.6 L3015.9,2901.1 L3000.8,2898.6 L2975.6,2913.7 L2953.0,2918.8 L2937.9,2944.0 L2937.9,2934.9 L2854.8,2934.9 L2800.0,2800.0 L2800.0,1800.0 L2400.0,1200.0 L2250.0,900.0 L2000.0,700.0 L1902.9,700.2 L1902.9,531.5 L1913.0,410.6 L1902.9,402.0 L1920.6,345.1Z" fill="#cccccc" stroke="#6e6e6e" stroke-width="2.2" stroke-linejoin="round"/>
<path d="M150.0,2339.2 L155.4,2339.2 L200.7,2329.2 L251.1,2351.8 L603.7,2402.2 L855.5,2603.7 L1057.0,2754.8 L1251.1,2878.1 L1452.6,2953.7 L1422.3,3052.9 L1422.3,3140.0 L150.0,3140.0Z" fill="#cccccc" stroke="#6e6e6e" stroke-width="2.2" stroke-linejoin="round"/>
<path d="M4251.2,1528.1 L4269.0,1518.0 L4285.0,1509.1 L4285.0,1541.7 L4277.9,1551.8 L4271.9,1538.7 L4260.1,1534.0 L4251.2,1534.0Z" fill="#cccccc" stroke="#6e6e6e" stroke-width="1.8" stroke-linejoin="round"/>
<path d="M4251.2,1652.6 L4269.0,1648.4 L4271.9,1663.2 L4285.0,1672.1 L4285.0,1679.8 L4251.2,1683.4Z" fill="#cccccc" stroke="#6e6e6e" stroke-width="1.8" stroke-linejoin="round"/>
<path d="M1873.7,476.1 L1878.8,462.0 L1887.8,450.9 L1893.9,438.3 L1897.9,443.3 L1900.4,466.0 L1892.9,481.1 L1882.8,490.2 L1875.2,486.1Z" fill="#cccccc" stroke="#6e6e6e" stroke-width="1.8" stroke-linejoin="round"/>
<path d="M1863.6,528.9 L1870.2,515.3 L1872.7,526.4 L1870.2,546.6 L1863.6,545.6Z" fill="#cccccc" stroke="#6e6e6e" stroke-width="1.8" stroke-linejoin="round"/>
<path d="M1824.9,732.9 L1832.4,726.9 L1845.0,732.9 L1837.5,739.0 L1827.4,738.0Z" fill="#cccccc" stroke="#6e6e6e" stroke-width="1.8" stroke-linejoin="round"/>
<path d="M3665.9,2298.5 L3673.4,2277.4 L3698.6,2264.8 L3713.7,2244.6 L3726.3,2236.1 L3736.4,2243.1 L3733.9,2254.7 L3746.5,2244.6 L3758.1,2238.1 L3766.6,2211.9 L3763.1,2251.2 L3770.1,2259.8" fill="none" stroke="#6e6e6e" stroke-width="1.8" stroke-linejoin="round"/>
<path d="M3665.9,2298.5 L3676.0,2288.5 L3701.1,2272.3 L3718.8,2252.2 L3726.3,2247.2" fill="none" stroke="#6e6e6e" stroke-width="1.8" stroke-linejoin="round"/>
<path d="M2817.0,1540.7 L2879.9,1491.8 L2878.4,1467.6 L2905.1,1470.1 L2906.1,1460.6 L2942.9,1465.1 L2938.9,1515.5 L2972.1,1515.5 L2973.1,1487.8 L2952.0,1486.8 L2959.5,1409.7 L2999.3,1418.8 L2999.8,1424.8 L3031.0,1429.9 L3035.1,1403.7 L3050.2,1402.7" fill="none" stroke="#7a7a7a" stroke-width="1.6" stroke-linejoin="round"/>
<path d="M3050.2,1344.7 L3040.1,1345.7 L3022.0,1392.1 L3050.2,1388.6" fill="none" stroke="#7a7a7a" stroke-width="1.6" stroke-linejoin="round"/>
<path d="M379.5,3134.2 L427.4,3087.9 L429.9,3095.0 L447.5,3078.8 L462.6,3083.9 L470.2,3073.8 L463.6,3056.2 L485.3,3071.3 L500.4,3048.6 L502.9,3026.0 L513.0,3018.4 L533.2,3024.5 L543.2,3020.9 L542.2,3010.9 L525.6,3001.8 L568.4,2988.2 L573.4,2983.2 L586.0,2984.2 L592.6,2965.5 L586.0,2942.9 L593.6,2947.9 L598.6,2965.5 L611.2,2972.1 L633.9,2970.6 L636.4,2978.1 L618.8,3003.3 L628.8,3012.4 L644.0,3005.8 L649.0,2983.2 L659.1,2980.6 L674.2,2990.7 L694.3,2988.2 L712.0,2993.2 L732.1,2980.6 L742.2,2982.1 L744.7,3003.3 L767.4,3028.5 L757.3,3048.6 L764.8,3083.9 L754.8,3109.1 L734.6,3114.1 L724.5,3121.7 L737.1,3131.7 L754.8,3134.2" fill="none" stroke="#7a7a7a" stroke-width="1.6" stroke-linejoin="round"/>
<path d="M2365.2,964.5 L2400.0,970.5 L2405.0,1025.9 L2410.5,1020.9 L2445.3,990.7 L2567.7,1146.8 L2563.6,1203.2 L2570.2,1204.7 L2571.2,1217.3 L2577.7,1218.3 L2577.7,1260.1 L2622.1,1330.6 L2628.1,1345.7 L2668.4,1348.3 L2667.4,1374.5 L2656.8,1374.5 L2673.4,1408.7 L2691.1,1412.7 L2718.8,1449.0 L2736.4,1464.1 L2817.0,1540.7 L2940.4,1653.0 L2941.4,1750.2 L2940.4,1906.5 L2949.5,1908.0 L2944.4,2002.2 L2938.9,2133.2 L2944.4,2236.4 L2934.3,2238.9 L2937.9,2259.1 L2937.9,2500.8 L2958.0,2503.3 L2959.0,2503.3 L2961.5,2558.7 L2947.9,2560.2 L2953.0,2637.7 L2936.4,2639.2 L2932.8,2701.2 L2944.4,2701.2 L2943.9,2767.7 L2897.6,2770.2 L2895.1,2820.6 L2942.9,2823.1 L2942.9,2843.2 L2926.8,2844.2 L2926.8,2876.0 L2891.0,2876.0 L2892.5,2933.9 L2937.9,2934.9 L2937.9,3054.8 L2040.8,3054.7 L1900.0,3000.0 L1500.0,2800.0 L1300.0,2500.0 L1500.0,2150.0 L1900.0,1900.0 L2000.0,1500.0 L2150.0,1250.0 L2300.0,1150.0 L2340.0,1000.0Z" fill="#e69800" stroke="#6e6e6e" stroke-width="2.2" stroke-linejoin="round"/>
<path d="M1657.1,1603.7 L1651.1,1641.4 L1638.5,1674.2 L1636.0,1704.4 L1618.4,1749.7 L1575.5,1795.1 L1530.2,1835.3 L1533.2,1830.2 L1497.9,1865.5 L1452.6,1900.7 L1412.3,1931.0 L1372.0,1956.1 L1336.7,1976.3 L1319.1,1988.9 L1296.4,2004.0 L1258.7,2029.2 L1200.7,2061.9 L1150.4,2087.1 L1100.0,2108.2 L1087.2,2125.2 L1057.0,2160.4 L1031.8,2185.6 L999.0,2208.3 L971.3,2218.4 L931.0,2241.0 L875.6,2261.2 L835.3,2281.3 L805.1,2298.9 L754.8,2311.5 L712.0,2317.6 L706.9,2329.2 L729.6,2346.8 L704.4,2360.9 L679.2,2351.8 L654.0,2326.6 L638.9,2301.5 L623.8,2288.9 L593.6,2287.4 L502.9,2293.9 L402.2,2304.0 L301.5,2311.5 L200.7,2329.2 L200.7,2351.8 L208.3,2366.9 L223.4,2392.1 L233.5,2412.3 L236.0,2442.5 L243.5,2467.7 L271.2,2480.3 L288.9,2495.4 L291.4,2508.0 L298.9,2507.0 L319.1,2485.3 L329.2,2495.4 L437.5,2496.4 L553.3,2704.4 L754.8,2905.9 L817.7,2926.0 L802.6,2947.9 L820.2,2963.0 L855.5,2983.2 L883.2,3001.8 L888.2,2975.6 L904.3,2968.0 L895.8,2937.8 L900.8,2842.1 L908.4,2805.1 L921.0,2797.6 L923.5,2779.9 L936.1,2757.3 L956.2,2759.8 L968.8,2764.8 L986.4,2749.7 L994.0,2747.2 L996.5,2759.8 L985.4,2762.3 L986.4,2782.5 L996.5,2792.5 L1011.6,2795.1 L1026.7,2807.6 L1046.9,2817.7 L1067.0,2825.3 L1082.1,2825.3 L1094.7,2836.4 L1122.4,2834.3 L1141.6,2840.4 L1301.5,2802.6 L1402.2,2651.5 L1412.3,2583.5 L1416.3,2555.5 L1388.1,2531.3 L1402.2,2495.1 L1408.2,2447.2 L1414.8,2424.5 L1401.2,2409.4 L1412.3,2396.8 L1418.3,2400.4 L1409.8,2406.9 L1419.8,2419.5 L1429.9,2409.4 L1414.8,2385.8 L1432.4,2384.2 L1436.4,2342.9 L1426.4,2341.4 L1428.4,2324.8 L1458.6,2326.3 L1460.1,2322.8 L1480.3,2324.8 L1478.8,2351.5 L1490.3,2351.5 L1500.4,2308.7 L1517.0,2308.7 L1518.0,2302.7 L1537.2,2301.1 L1538.2,2296.1 L1553.3,2295.1 L1557.3,2273.4 L1576.0,2272.4 L1579.5,2248.3 L1568.4,2248.3 L1567.4,2234.2 L1540.7,2232.1 L1543.2,2200.4 L1555.8,2171.7 L1534.2,2168.7 L1535.7,2143.5 L1555.8,2133.4 L1576.0,2150.0 L1577.5,2144.0 L1601.1,2172.7 L1632.9,2148.5 L1641.4,2150.0 L1636.4,2187.8 L1618.8,2186.8 L1633.9,2197.9 L1628.8,2228.1 L1629.9,2248.3 L1689.3,2276.0 L1815.2,2303.7 L1798.6,2394.3 L1846.9,2395.8 L1859.0,2193.9 L1985.4,2202.9 L1992.5,2117.3 L2058.0,2118.3 L2067.0,2066.9 L2103.3,2036.7 L2103.8,2024.1 L2107.3,1981.3 L2200.0,1993.9 L2239.3,2003.7 L2231.2,1976.0 L2295.7,1999.7 L2303.3,1810.8 L2308.3,1765.5 L2331.0,1754.8 L2331.0,1684.2 L2205.1,1654.0 L2003.7,1502.9 L1852.6,1492.9 L1741.8,1462.6 L1676.3,1528.1Z" fill="#ffff00" stroke="#6e6e6e" stroke-width="2.2" stroke-linejoin="round"/>
<path d="M1657.6,2482.7 L1749.7,2480.2 L1750.7,2462.6 L1767.4,2463.6 L1764.8,2490.3 L1832.8,2488.8 L1836.4,2454.0 L1878.2,2454.0 L1883.2,2722.0 L2002.6,2722.0 L2004.1,2749.7 L2040.8,2749.7 L2041.8,2802.6 L2034.3,3052.9 L1422.3,3052.9 L1422.3,3001.5 L1414.8,3001.5 L1416.3,2978.8 L1422.3,2978.8 L1422.3,2927.0 L1311.5,2923.4 L1315.6,2914.4 L1304.0,2910.9 L1301.5,2928.5 L1287.4,2926.0 L1291.4,2913.4 L1276.3,2912.4 L1251.1,2913.4 L1233.5,2914.4 L1210.8,2898.3 L1198.2,2880.6 L1175.5,2863.0 L1147.8,2847.9 L1142.8,2837.8 L1155.4,2822.7 L1160.4,2826.7 L1165.5,2806.6 L1213.3,2808.6 L1203.3,2762.3 L1205.8,2734.6 L1208.3,2722.0 L1191.7,2719.5 L1193.2,2712.9 L1255.1,2696.8 L1257.1,2654.0 L1273.8,2651.5 L1281.3,2643.9 L1311.5,2631.3 L1321.6,2626.3 L1309.0,2610.2 L1329.2,2606.1 L1331.7,2578.4 L1355.9,2573.4 L1356.9,2598.6 L1394.6,2601.1 L1399.7,2581.0 L1412.3,2583.5 L1409.8,2591.0 L1427.4,2593.5 L1427.4,2613.7 L1450.0,2616.2 L1460.1,2601.1 L1477.7,2608.7 L1457.6,2651.5 L1495.4,2654.0 L1500.4,2633.8 L1559.3,2633.8 L1558.3,2666.6 L1586.0,2669.1 L1592.6,2600.1 L1656.5,2600.1Z" fill="#e60000" stroke="#6e6e6e" stroke-width="2.2" stroke-linejoin="round"/>
<path d="M1862.6,1183.1 L1915.5,1185.6 L1917.0,1179.1 L1947.3,1183.1 L1950.8,1193.2 L1981.0,1200.7 L1988.6,1228.4 L1996.1,1241.0 L2018.8,1241.0 L2039.9,1227.4 L2041.4,1251.1 L2027.8,1276.3 L2044.0,1283.8 L2066.6,1283.8 L2084.2,1304.0 L2066.6,1325.1 L2114.5,1315.1 L2149.7,1319.1 L2184.0,1329.2 L2211.2,1345.3 L2185.0,1389.6 L2167.4,1429.9 L2205.1,1438.5 L2227.8,1417.3 L2232.8,1427.4 L2244.4,1429.9 L2249.5,1442.5 L2247.9,1463.6 L2230.3,1471.7 L2237.9,1497.9 L2242.9,1543.2 L2276.6,1553.3 L2273.1,1582.5 L2250.5,1584.5 L2251.5,1608.7 L2246.9,1618.8 L2253.0,1637.9 L2265.6,1640.4 L2265.6,1649.0 L2300.8,1667.6 L2350.2,1665.1 L2351.2,1704.4 L2348.7,1765.8 L2308.4,1764.8 L2310.9,1701.9 L2137.1,1696.8 L2118.5,1811.2 L2084.2,1803.6 L2088.3,1830.3 L2071.7,1827.8 L2066.6,1800.1 L2038.9,1796.6 L2033.9,1801.1 L1997.6,1801.1 L1996.1,1794.0 L1986.0,1792.5 L1986.0,1781.0 L1996.1,1779.9 L1996.1,1757.3 L1978.5,1756.3 L1978.5,1626.3 L1955.8,1604.7 L1943.2,1614.7 L1943.2,1623.8 L1960.9,1622.3 L1965.9,1636.4 L1960.9,1650.0 L1938.2,1646.5 L1934.2,1660.1 L1924.6,1661.6 L1923.1,1641.4 L1902.9,1641.4 L1898.9,1591.1 L1932.1,1589.6 L1932.1,1585.0 L1901.4,1587.5 L1914.0,1548.3 L1866.7,1559.3 L1880.3,1517.0 L1872.7,1515.5 L1814.8,1500.4 L1814.8,1466.2 L1794.6,1465.2 L1778.5,1447.5 L1772.0,1455.1 L1761.9,1445.0 L1724.1,1421.3 L1727.7,1399.7 L1716.6,1405.7 L1686.4,1395.7 L1685.3,1374.5 L1687.4,1361.9 L1716.6,1331.7 L1741.8,1311.5 L1782.1,1283.8 L1802.2,1268.7 L1822.3,1261.2 L1842.5,1225.9 L1855.1,1200.7Z" fill="#38a800" stroke="#6e6e6e" stroke-width="2.2" stroke-linejoin="round"/>
<path d="M1902.9,402.0 L1892.9,438.3 L1882.8,463.5 L1877.7,491.2 L1870.2,516.4 L1860.1,541.5 L1852.6,571.8 L1847.5,612.1 L1847.5,632.2 L1837.5,662.4 L1824.9,702.7 L1822.3,732.9 L1827.4,763.2 L1832.4,798.4 L1836.4,818.6 L1829.9,843.7 L1830.9,884.0 L1833.4,924.3 L1834.9,959.6 L1841.5,979.7 L1838.5,994.8 L1829.9,1007.4 L1834.9,1022.5 L1842.5,1055.3 L1834.9,1075.4 L1832.4,1095.6 L1847.5,1130.8 L1855.1,1145.9 L1852.6,1166.1 L1862.6,1170.5 L1862.6,1183.1 L1915.5,1185.6 L1917.0,1179.1 L1947.3,1183.1 L1950.8,1193.2 L1981.0,1200.7 L1988.6,1228.4 L1996.1,1241.0 L2018.8,1241.0 L2039.9,1227.4 L2041.4,1251.1 L2027.8,1276.3 L2044.0,1283.8 L2066.6,1283.8 L2084.2,1304.0 L2066.6,1325.1 L2114.5,1315.1 L2149.7,1319.1 L2184.0,1329.2 L2192.5,1305.5 L2217.7,1307.5 L2220.2,1334.2 L2236.4,1335.2 L2237.9,1283.8 L2227.8,1288.9 L2207.6,1286.4 L2209.2,1233.5 L2237.9,1234.5 L2240.4,1242.5 L2241.4,1220.9 L2314.9,1218.4 L2314.9,1198.2 L2300.8,1196.7 L2304.9,1175.5 L2311.9,1174.5 L2315.9,1127.7 L2346.2,1127.7 L2350.2,1090.5 L2356.2,1050.2 L2364.8,965.6 L2367.3,927.8 L2338.6,925.8 L2341.1,896.1 L2370.3,895.1 L2232.8,718.8 L2231.3,726.9 L2217.7,727.9 L2202.6,735.4 L2194.0,747.0 L2190.0,764.2 L2182.5,765.7 L2179.9,774.2 L2153.8,774.2 L2129.6,759.6 L2101.9,759.6 L2083.2,763.2 L2082.7,740.5 L2044.0,732.9 L2051.5,691.6 L2046.5,669.0 L1959.3,671.0 L1954.8,660.4 L1918.0,659.9 L1923.1,402.0Z" fill="#ffffff" stroke="#6e6e6e" stroke-width="2.2" stroke-linejoin="round"/>
<path d="M1686.4,1395.7 L1671.2,1412.3 L1653.6,1432.4 L1656.1,1455.1 L1668.7,1467.7 L1666.2,1497.9 L1651.1,1533.2 L1653.6,1568.4 L1657.1,1603.7 L1709.0,1596.1 L1710.5,1555.8 L1746.8,1548.3 L1749.3,1502.9 L1814.8,1500.4 L1814.8,1466.2 L1794.6,1465.2 L1778.5,1447.5 L1772.0,1455.1 L1761.9,1445.0 L1724.1,1421.3 L1727.7,1399.7 L1716.6,1405.7Z" fill="#ffffff" stroke="#6e6e6e" stroke-width="2.2" stroke-linejoin="round"/>
<path d="M437.5,2496.4 L404.7,2447.5 L413.3,2418.3 L452.6,2419.8 L468.7,2402.2 L470.2,2392.1 L502.9,2393.1 L522.1,2383.1 L527.1,2391.1 L520.6,2397.2 L519.0,2422.3 L560.9,2434.9 L574.5,2428.4 L576.0,2438.5 L605.2,2448.5 L617.8,2446.5 L618.8,2440.0 L646.5,2427.4 L671.7,2421.3 L701.9,2434.9 L706.9,2442.5 L706.9,2455.1 L732.1,2461.6 L743.7,2460.1 L770.9,2470.2 L759.8,2485.3 L754.8,2482.8 L742.2,2508.0 L729.6,2509.0 L722.0,2530.6 L710.4,2545.7 L718.5,2545.7 L704.4,2553.3 L704.4,2568.4 L699.4,2573.4 L696.8,2588.6 L669.1,2606.2 L661.6,2604.7 L645.5,2618.8 L663.1,2641.4 L674.2,2628.8 L713.5,2609.7 L722.0,2616.3 L728.6,2613.7 L727.1,2623.8 L722.0,2633.9 L724.5,2659.1 L732.1,2679.2 L737.1,2694.3 L747.2,2709.4 L749.7,2729.6 L767.4,2747.2 L774.9,2797.6 L779.9,2796.6 L774.9,2745.7 L790.0,2734.6 L804.1,2752.2 L804.1,2760.8 L787.5,2763.8 L802.6,2805.1 L805.1,2840.4 L784.0,2845.4 L794.0,2873.1 L802.6,2879.7 L868.1,2874.6 L868.1,2879.7 L790.0,2885.7 L790.0,2900.8 L817.7,2926.0 L800.1,2948.7 L785.0,2931.0 L782.5,2942.1 L739.7,2918.5 L696.8,2910.9 L679.2,2888.2 L661.6,2881.7 L641.4,2884.7 L613.7,2880.7 L603.7,2858.0 L578.5,2847.9 L560.9,2827.8 L550.8,2825.3 L554.8,2810.2 L533.2,2807.6 L518.0,2817.7 L492.9,2811.2 L478.8,2802.6 L480.3,2790.0 L463.6,2774.9 L461.6,2762.3 L453.6,2757.3 L451.6,2722.0 L461.6,2712.0 L436.4,2656.5 L442.5,2651.5 L436.4,2568.4 L441.5,2565.9 L440.0,2496.4Z" fill="#ffffff" stroke="#6e6e6e" stroke-width="2.2" stroke-linejoin="round"/>
<path d="M684.2,2452.6 L688.3,2446.5 L695.8,2444.5 L700.4,2449.5 L699.4,2458.6 L691.8,2460.1 L685.3,2456.6Z" fill="#ffff00" stroke="#6e6e6e" stroke-width="1.8"/>
<path d="M1623.4,1451.6 L1653.6,1452.6" stroke="#6e6e6e" stroke-width="2" fill="none"/>
<path d="M1840.0,962.1 L1945.7,923.3 L2006.2,929.4 L2007.7,925.8 L2036.4,931.9 L2037.9,916.8 L2055.5,915.8 L2056.5,910.2 L2065.1,910.2 L2063.1,948.5 L2106.9,953.0 L2108.4,934.4 L2104.4,927.8 L2124.5,921.8 L2127.1,914.2 L2159.8,915.3 L2163.8,923.3 L2179.9,925.3 L2182.5,954.5 L2189.0,965.6 L2210.2,964.6 L2212.7,997.4 L2237.9,999.9 L2240.4,962.1 L2253.0,960.6 L2254.0,952.0 L2268.1,953.0 L2269.6,945.5 L2289.2,948.5 L2286.7,974.7 L2265.6,1009.9 L2328.5,1026.1 L2318.5,1046.2 L2356.2,1049.2" fill="none" stroke="#6e6e6e" stroke-width="2.2" stroke-linejoin="round"/>
<path d="M1834.9,1023.5 L1872.7,1025.1 L1873.7,1039.2 L1900.4,1040.2 L1910.5,1026.1 L1933.2,1037.6 L1937.2,1050.2 L1984.5,1051.2 L1991.1,1064.3 L2018.8,1076.4 L2017.8,1084.0 L2088.3,1081.5 L2090.3,1138.4 L2091.8,1137.8 L2104.4,1139.3 L2106.9,1127.7 L2143.7,1116.6 L2164.8,1136.3 L2177.4,1154.4 L2205.1,1150.4 L2236.4,1151.4 L2236.4,1164.5 L2219.2,1165.5 L2219.2,1175.5 L2236.4,1176.6 L2237.9,1198.2 L2242.9,1199.2 L2242.9,1210.8 L2230.3,1211.8 L2230.3,1220.9 L2241.4,1220.9" fill="none" stroke="#6e6e6e" stroke-width="2.2" stroke-linejoin="round"/>
<path d="M2295.7,2001.2 L2420.1,1995.7 L2424.1,1966.9 L2576.7,1972.0 L2586.8,1882.8 L2664.4,1890.4 L2668.4,2065.2 L2723.8,2061.6 L2812.0,2063.6 L2867.4,2061.1 L2872.4,2134.2 L2938.9,2130.6" fill="none" stroke="#6e6e6e" stroke-width="2.2" stroke-linejoin="round"/>
<path d="M2103.8,2025.6 L2182.9,2027.7 L2185.2,2055.7 L2205.3,2056.6 L2189.2,2200.0 L2180.4,2276.0 L2136.5,2273.4 L2135.0,2260.9 L2103.3,2260.9 L2101.3,2291.1 L2121.4,2296.1 L2118.4,2312.7 L2091.2,2312.7 L2087.2,2337.9 L2073.1,2338.9 L2064.5,2379.2 L2074.6,2381.7 L2072.1,2406.9 L2093.2,2409.4 L2097.3,2449.7 L2102.3,2452.2 L2099.8,2479.9 L2114.9,2482.5 L2114.9,2489.0 L2162.7,2487.5 L2157.7,2553.0 L2175.3,2554.3 L2170.3,2722.0 L2030.8,2726.0 L2029.3,2749.7" fill="none" stroke="#6e6e6e" stroke-width="2.2" stroke-linejoin="round"/>
<path d="M1319.1,1998.9 L1331.7,1996.4 L1372.0,2035.2 L1387.1,2009.0 L1408.2,2035.2 L1391.1,2050.3 L1438.5,2096.2 L1456.6,2075.5 L1492.9,2102.2 L1481.3,2117.3 L1482.8,2132.4 L1518.0,2168.7 L1534.2,2168.7" fill="none" stroke="#6e6e6e" stroke-width="2.2" stroke-linejoin="round"/>
<text class="lbl" x="2009.7" y="837.2">Calkiní</text>
<text class="lbl" x="2029.8" y="1052.2">Hecelchakán</text>
<text class="lbl" x="2008.7" y="1187.6">Tenabo</text>
<text class="lbl" x="1930.6" y="1497">Campeche</text>
<text class="lbl" x="1610.8" y="1505">Seybaplaya</text>
<text class="lbl" x="2468.4" y="1622">Hopelchén</text>
<text class="lbl" x="1712" y="1970.7">Champotón</text>
<text class="lbl" x="1661.6" y="2437.6">Escárcega</text>
<text class="lbl" x="1009" y="2452">Carmen</text>
<text class="lbl" x="478.7" y="2669.6">Palizada</text>
<text class="lbl" x="1535.7" y="2822">Candelaria</text>
<text class="lbl" x="2483" y="2555.6">Calakmul</text>
<text class="st" x="2687.5" y="611">Yucatán</text>
<text class="st" x="3193" y="2357">Quintana Roo</text>
<text class="st" x="195.7" y="2817.7">Tabasco</text>
<g transform="translate(1952.8,1390) scale(1.041)"><circle r="39.2" fill="#fff" stroke="#000" stroke-width="1"/><use href="#ic-otros"/></g>
<g transform="translate(2455.4,1390.6) scale(1.059)"><circle r="39.2" fill="#fff" stroke="#000" stroke-width="1"/><use href="#ic-otros"/></g>
<g transform="translate(2569,1505) scale(1.066)"><circle r="39.2" fill="#fff" stroke="#000" stroke-width="1"/><use href="#ic-maiz"/></g>
<g transform="translate(1843.4,2077) scale(1.028)"><circle r="39.2" fill="#fff" stroke="#000" stroke-width="1"/><use href="#ic-cana"/></g>
<g transform="translate(1953.7,2341.4) scale(1.117)"><circle r="39.2" fill="#fff" stroke="#000" stroke-width="1"/><use href="#ic-otros"/></g>
<g transform="translate(1049.4,2586) scale(1.148)"><circle r="39.2" fill="#fff" stroke="#000" stroke-width="1"/><use href="#ic-otros"/></g>
<g transform="translate(1641.9,2906.8) scale(1.079)"><circle r="39.2" fill="#fff" stroke="#000" stroke-width="1"/><use href="#ic-otros"/></g>
<g transform="translate(2449.3,2685.6) scale(1.033)"><circle r="39.2" fill="#fff" stroke="#000" stroke-width="1"/><use href="#ic-maiz"/></g>
<g transform="translate(2705.2,2672) scale(1.008)"><circle r="39.2" fill="#fff" stroke="#000" stroke-width="1"/><use href="#ic-chile"/></g>
<g stroke="#4d4d4d" fill="none"><circle cx="252.7" cy="474" r="58" stroke-width="3"/><path d="M176,474H329.5" stroke-width="2"/></g>
<path d="M252.4,400.9 L231,548.7 L250.2,533.4 L255.9,533.4 L274.4,548.7Z" fill="#4d4d4d"/>
<text x="252.2" y="396.6" text-anchor="middle" font-size="29.7" fill="#4d4d4d">N</text>
<path d="M192.2,3048.6 V3007.3 H340.8 V3048.6 H487.8 V3007.3 H786 V3048.6" fill="none" stroke="#4d4d4d" stroke-width="4.5" stroke-linejoin="miter" stroke-linecap="round"/>
<text x="192.2" y="3106.5" text-anchor="middle" font-size="45.7" fill="#4d4d4d">0</text>
<text x="340.8" y="3106.5" text-anchor="middle" font-size="45.7" fill="#4d4d4d">20</text>
<text x="487.8" y="3106.5" text-anchor="middle" font-size="45.7" fill="#4d4d4d">40</text>
<text x="786" y="3106.5" text-anchor="middle" font-size="45.7" fill="#4d4d4d">80</text>
<text x="800" y="3049.6" font-size="45.7" fill="#4d4d4d">Km</text>
<rect x="3053" y="377.5" width="1199.5" height="1464" fill="#fff" stroke="#6e6e6e" stroke-width="5.5"/>
<rect x="3056" y="380" width="1194" height="209" fill="url(#glh)"/>
<rect x="3056" y="593" width="1194" height="52" fill="url(#glh2)"/>
<path d="M3053,590.5H4252.5" stroke="#6e6e6e" stroke-width="6"/>
<path d="M3053,1201.5H4252.5" stroke="#6e6e6e" stroke-width="6"/>
<path d="M3053,1628H4252.5" stroke="#6e6e6e" stroke-width="6"/>
<text x="3651" y="478" text-anchor="middle" font-size="55.3" font-weight="bold" fill="#555">SIN ACCESO A SERVICIO MÉDICO</text>
<text x="3657.5" y="541.7" text-anchor="middle" font-size="55.3" font-weight="bold" fill="#555">PROPORCIÓN 0- 1</text>
<text class="lgb" x="3119" y="665.5">Cuartiles</text><text class="lgb" x="3801.8" y="667" font-size="43">Nivel</text>
<rect x="3121" y="700.4" width="146" height="71.20000000000005" fill="#ffffff" stroke="#6e6e6e" stroke-width="2"/>
<text class="rng" x="3291.7" y="754.0">SD</text>
<text class="lg" x="3803.6" y="763">Sin Dato</text>
<rect x="3121" y="798" width="146" height="72.39999999999998" fill="#38a800" stroke="#6e6e6e" stroke-width="2"/>
<text class="rng" x="3291.7" y="852.2">0.32476 - 0.90949</text>
<text class="lg" x="3803.6" y="860">Bajo (Con acceso)</text>
<rect x="3121" y="896.8" width="146" height="71.80000000000007" fill="#ffff00" stroke="#6e6e6e" stroke-width="2"/>
<text class="rng" x="3291.7" y="950.7">0.90949 - 0.98082</text>
<text class="lg" x="3803.6" y="955.5">Medio</text>
<rect x="3121" y="995" width="146" height="72.5" fill="#e69800" stroke="#6e6e6e" stroke-width="2"/>
<text class="rng" x="3291.7" y="1049.25">0.98082 - 0.99603</text>
<text class="lg" x="3803.6" y="1058.5">Alto</text>
<rect x="3121" y="1093.9" width="146" height="71.79999999999995" fill="#e60000" stroke="#6e6e6e" stroke-width="2"/>
<text class="rng" x="3291.7" y="1147.8000000000002">0.99603 - 1.00000</text>
<text class="lg" x="3803.6" y="1153">Máximo (Sin acceso)</text>
<text class="lgb" x="3076" y="1258">Cultivos</text>
<g transform="translate(3188.3,1412.8) scale(0.995)"><circle r="39.2" fill="#fff" stroke="#000" stroke-width="1" stroke-dasharray="4 2.5"/><use href="#ic-chile"/></g>
<g transform="translate(3190,1520) scale(0.995)"><circle r="39.2" fill="#fff" stroke="#000" stroke-width="1" stroke-dasharray="4 2.5"/><use href="#ic-maiz"/></g>
<g transform="translate(3739,1402) scale(1.008)"><circle r="39.2" fill="#fff" stroke="#000" stroke-width="1" stroke-dasharray="4 2.5"/><use href="#ic-otros"/></g>
<g transform="translate(3748.5,1523.4) scale(1.000)"><circle r="39.2" fill="#fff" stroke="#000" stroke-width="1" stroke-dasharray="4 2.5"/><use href="#ic-cana"/></g>
<text class="lg" x="3261" y="1431.5">Chile verde</text><text class="lg" x="3263.7" y="1534">Maíz grano</text><text class="lg" x="3800" y="1416.8">Otros cultivos</text><text class="lg" x="3805" y="1537">Caña de azucar</text>
<text class="lgb" x="3077" y="1676.8">Fuente:</text>
<text class="src" x="3076" y="1728.6" textLength="1058" lengthAdjust="spacing">-Elaboración propia con microdatos del cuestionario ampliado</text>
<text class="src" x="3086.3" y="1773" textLength="360" lengthAdjust="spacing">CENSO INEGI 2020.</text>
<text class="src" x="3076" y="1818" textLength="1086" lengthAdjust="spacing">-Sistema de Información Agropecuaria y Pesquera (SIAP) 2019</text>
<rect x="3053" y="1874.5" width="1199.5" height="148.5" fill="#fff" stroke="#6e6e6e" stroke-width="6"/>
<g fill="#e07b00"><rect x="3133.8" y="1909.3" width="66" height="18.4"/><rect x="3158" y="1927" width="19.2" height="57.8"/><rect x="3299.2" y="1909.3" width="66" height="18.4"/></g>
<rect x="3322.8" y="1936.8" width="18" height="48" fill="#f0bc80"/>
<g fill="none" stroke="#e07b00" stroke-width="6"><path d="M3223,1984.8 V1912.3 H3252 A27,25 0 0 1 3252,1962.5 H3240"/><path d="M3235,1984.8 V1924 H3251 A15,13.5 0 0 1 3251,1951 H3240"/></g>
<text x="3145" y="2001" font-size="6.5" fill="#f0c090" textLength="209" lengthAdjust="spacing" font-family="Liberation Serif">EVALUACIÓN Y PROYECTOS S.C.</text>
<rect x="3472.5" y="1903.8" width="74.4" height="63.1" rx="7" fill="#4a86c8"/>
<g fill="#f6dcc6"><path d="M3475,1909 l10,-2 l14,3 l14,1 v6 l-14,2 l-10,1 l-12,-3 l3,-2 l-5,-2 l5,-1z"/><rect x="3498" y="1916" width="9" height="30"/><rect x="3490" y="1946" width="32" height="5"/><path d="M3488,1953 h36 l8,10 h-44z"/><ellipse cx="3528" cy="1928" rx="7" ry="6"/><ellipse cx="3526" cy="1940" rx="8" ry="8"/><path d="M3532,1932 l10,10 l-8,2z"/></g>
<g fill="#4a86c8"><circle cx="3525.5" cy="1928" r="2"/><circle cx="3531" cy="1928" r="2"/><rect x="3491" y="1955.5" width="28" height="2"/><rect x="3491" y="1959.5" width="28" height="2"/></g>
<text x="3472" y="1993.5" font-size="27" font-weight="bold" font-style="italic" fill="#3f7ac0" stroke="#3f7ac0" stroke-width="1.2" textLength="75" lengthAdjust="spacingAndGlyphs">CIESAS</text>
<text x="3562.7" y="1932" font-size="21" font-weight="bold" fill="#3e74b8" textLength="247" lengthAdjust="spacingAndGlyphs">CENTRO DE INVESTIGACIONES</text>
<text x="3562.7" y="1961.3" font-size="21" font-weight="bold" fill="#3e74b8" textLength="201" lengthAdjust="spacingAndGlyphs">Y ESTUDIOS SUPERIORES</text>
<text x="3562.7" y="1990" font-size="21" font-weight="bold" fill="#3e74b8" textLength="224" lengthAdjust="spacingAndGlyphs">EN ANTROPOLOGÍA SOCIAL</text>
<svg x="3880" y="1895" width="320" height="115" viewBox="0 0 2184 785"><g fill="#2a6496"><path d="M105,138 L205,138 L365,495 L432,350 L500,495 L660,138 L762,138 L515,660 L432,490 L350,660Z"/><path d="M262,138 L345,138 L415,300 L365,392Z"/><path d="M602,138 L519,138 L449,300 L499,392Z"/><path d="M400,138 L465,138 L432,215Z"/></g><rect x="868" y="138" width="18" height="524" fill="#555"/></svg>
<text x="4028" y="1948" font-size="44.4" font-weight="bold" fill="#4d4d4d" textLength="142.8" lengthAdjust="spacingAndGlyphs">Wilson</text><text x="4030.2" y="1991" font-size="44.4" font-weight="bold" fill="#4d4d4d" textLength="140.6" lengthAdjust="spacingAndGlyphs">Center</text>
<rect x="3695.5" y="2895.5" width="557.5" height="208" fill="#fff" stroke="#555" stroke-width="3"/>
<svg x="3694.3" y="2894.3" width="559.9" height="210.4" viewBox="52 52 2038 766" overflow="hidden">
<g fill="none" stroke="#000"><path d="M76,350 A450,441 0 0 0 976,350" stroke-width="28"/>
<g stroke-width="20"><path d="M120,240 C300,240 480,260 805,485"/><path d="M120,325 C330,325 520,390 725,535"/><path d="M120,412 C300,415 480,480 645,592"/><path d="M455,275 C510,235 570,210 625,195"/><path d="M560,310 C640,260 720,235 780,228 L858,228"/><path d="M650,360 C720,320 820,300 918,300"/></g>
<g stroke-width="14"><path d="M217,140V240M518,140V228M812,140V228"/></g>
<g stroke-width="12" stroke-linecap="round"><path d="M154,60 C150,98 182,122 210,136 M280,60 C286,98 253,122 225,136 M176,84 C182,100 196,112 210,120 M258,84 C252,100 238,112 224,120"/><path d="M752,60 C748,98 780,122 806,136 M872,60 C878,98 848,122 820,136 M772,84 C778,100 792,112 806,120 M854,84 C848,100 834,112 820,120"/></g></g>
<path d="M458,105 l8,-14 l6,14 l8,-16 l4,16 l10,-14 l2,16 l12,-8 l6,22 c-20,14 -50,10 -56,-16z M578,105 l-8,-14 l-6,14 l-8,-16 l-4,16 l-10,-14 l-2,16 l-12,-8 l-6,22 c20,14 50,10 56,-16z" fill="#000"/>
<text x="1060" y="228" font-size="123" fill="#000" stroke="#fff" stroke-width="3" textLength="975" lengthAdjust="spacingAndGlyphs">JORNALEROS EN</text>
<text x="1055" y="388" font-size="123" fill="#000" stroke="#fff" stroke-width="3" textLength="990" lengthAdjust="spacingAndGlyphs">LA AGRICULTURA</text>
<text x="1020" y="548" font-size="123" fill="#000" stroke="#fff" stroke-width="3" textLength="1060" lengthAdjust="spacingAndGlyphs">DE EXPORTACIÓN</text>
</svg>
</svg>
</div>
<div id="ftr" class="abs"></div>
</body></html>
